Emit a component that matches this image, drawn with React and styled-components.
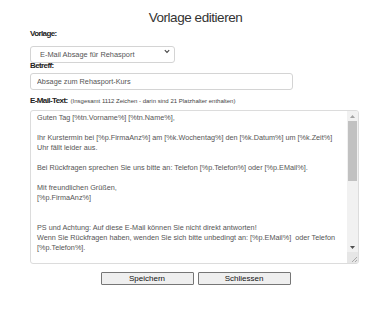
import React from 'react';
import styled, { createGlobalStyle } from 'styled-components';

const GlobalStyle = createGlobalStyle`
    html, body {
        margin: 0;
        padding: 0;
        background: #fff;
    }
    body {
        font-family: 'Liberation Sans', Arial, sans-serif;
        color: #333;
    }
`;

const Page = styled.div`
    width: 391px;
    height: 312px;
    padding: 9px 0 0 30px;
    box-sizing: border-box;
`;

const Title = styled.h1`
    margin: 0 0 2px -30px;
    font-size: 13.5px;
    line-height: 18px;
    letter-spacing: -0.45px;
    font-weight: 400;
    color: #333;
    text-align: center;
`;

const Label = styled.div`
    margin-top: ${({ gap }) => gap || 0}px;
    font-size: 8px;
    line-height: 10px;
    letter-spacing: -0.6px;
    font-weight: bold;
    color: #222;
`;

const Hint = styled.span`
    margin-left: 3px;
    font-size: 6px;
    letter-spacing: 0;
    font-weight: 400;
    color: #444;
`;

const SelectBox = styled.div`
    position: relative;
    width: 145px;
    height: 17px;
    margin-top: 4px;
`;

const Select = styled.select`
    appearance: none;
    width: 100%;
    height: 100%;
    box-sizing: border-box;
    padding: 0 0 0 9px;
    border: 1px solid #d4d4d4;
    border-radius: 3px;
    background: #fff;
    font-family: inherit;
    font-size: 7.4px;
    color: #555;
    outline: none;
`;

const Chevron = styled.svg`
    position: absolute;
    right: 5px;
    top: 6px;
    width: 6px;
    height: 5px;
    pointer-events: none;
`;

const Input = styled.input`
    display: block;
    width: 263px;
    height: 17px;
    margin-top: 2px;
    box-sizing: border-box;
    padding: 0 6px;
    border: 1px solid #d4d4d4;
    border-radius: 3px;
    font-family: inherit;
    font-size: 7.3px;
    color: #555;
    outline: none;
`;

const Editor = styled.div`
    display: flex;
    width: 329px;
    height: 154px;
    margin-top: 4px;
    box-sizing: border-box;
    border: 1px solid #dcdcdc;
    border-radius: 3px;
    overflow: hidden;
`;

const EditorText = styled.div`
    flex: 1;
    padding: 2px 6px;
    font-size: 7.25px;
    line-height: 10px;
    color: #555;
    white-space: pre;
    overflow: hidden;
`;

const Scrollbar = styled.div`
    display: flex;
    flex-direction: column;
    align-items: center;
    width: 11px;
    background: #f1f1f1;
`;

const ArrowBtn = styled.div`
    display: flex;
    align-items: center;
    justify-content: center;
    width: 100%;
    height: 10px;
`;

const Thumb = styled.div`
    width: 9px;
    height: 60px;
    background: #c1c1c1;
`;

const Track = styled.div`
    flex: 1;
`;

const Grip = styled.div`
    display: flex;
    align-items: flex-end;
    justify-content: flex-end;
    width: 100%;
    height: 11px;
    background: #e6e6e6;
`;

const Actions = styled.div`
    display: flex;
    justify-content: center;
    gap: 4px;
    margin: 8px 0 0 -30px;
`;

const Button = styled.button`
    flex: none;
    width: 93px;
    height: 13px;
    padding: 0;
    border: 1px solid #767676;
    border-radius: 1px;
    background: #efefef;
    font-family: inherit;
    font-size: 8px;
    line-height: 11px;
    color: #111;
`;

const mailText = `Guten Tag [%tn.Vorname%] [%tn.Name%],

Ihr Kurstermin bei [%p.FirmaAnz%] am [%k.Wochentag%] den [%k.Datum%] um [%k.Zeit%]
Uhr fällt leider aus.

Bei Rückfragen sprechen Sie uns bitte an: Telefon [%p.Telefon%] oder [%p.EMail%].

Mit freundlichen Grüßen,
[%p.FirmaAnz%]


PS und Achtung: Auf diese E-Mail können Sie nicht direkt antworten!
Wenn Sie Rückfragen haben, wenden Sie sich bitte unbedingt an: [%p.EMail%]  oder Telefon
[%p.Telefon%].`;

export default function App() {
    return (
        <Page>
            <GlobalStyle />
            <Title>Vorlage editieren</Title>

            <Label>Vorlage:</Label>
            <SelectBox>
                <Select defaultValue="absage">
                    <option value="absage">E-Mail Absage für Rehasport</option>
                </Select>
                <Chevron viewBox="0 0 6 5">
                    <path d="M0.8 1.2 L3 3.4 L5.2 1.2" fill="none" stroke="#444" strokeWidth="1.1" />
                </Chevron>
            </SelectBox>

            <Label gap={1}>Betreff:</Label>
            <Input defaultValue="Absage zum Rehasport-Kurs" />

            <Label gap={6}>
                E-Mail-Text:
                <Hint>(Insgesamt 1112 Zeichen - darin sind 21 Platzhalter enthalten)</Hint>
            </Label>
            <Editor>
                <EditorText>{mailText}</EditorText>
                <Scrollbar>
                    <ArrowBtn>
                        <svg width="5" height="3" viewBox="0 0 5 3">
                            <path d="M0 3 L2.5 0 L5 3 Z" fill="#a3a3a3" />
                        </svg>
                    </ArrowBtn>
                    <Thumb />
                    <Track />
                    <ArrowBtn>
                        <svg width="5" height="3" viewBox="0 0 5 3">
                            <path d="M0 0 L2.5 3 L5 0 Z" fill="#505050" />
                        </svg>
                    </ArrowBtn>
                    <Grip>
                        <svg width="8" height="8" viewBox="0 0 8 8">
                            <path d="M7 2 L2 7 M7 5 L5 7" stroke="#999" strokeWidth="0.8" />
                        </svg>
                    </Grip>
                </Scrollbar>
            </Editor>

            <Actions>
                <Button>Speichern</Button>
                <Button>Schliessen</Button>
            </Actions>
        </Page>
    );
}
